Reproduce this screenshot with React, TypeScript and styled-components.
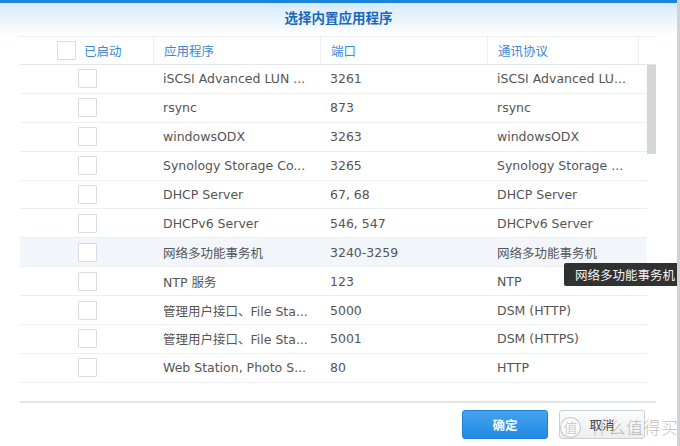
import React from 'react'
import styled, { createGlobalStyle } from 'styled-components'

const GlobalStyle = createGlobalStyle`
  html, body {
    margin: 0;
    padding: 0;
    background: #ffffff;
  }
  body {
    font-family: 'DejaVu Sans', 'Noto Sans CJK SC', sans-serif;
  }
`

interface rowProps {
  highlighted?: boolean
}

interface buttonProps {
  primary?: boolean
}

const ROWS = [
  { app: 'iSCSI Advanced LUN ...', port: '3261', proto: 'iSCSI Advanced LU...' },
  { app: 'rsync', port: '873', proto: 'rsync' },
  { app: 'windowsODX', port: '3263', proto: 'windowsODX' },
  { app: 'Synology Storage Co...', port: '3265', proto: 'Synology Storage ...' },
  { app: 'DHCP Server', port: '67, 68', proto: 'DHCP Server' },
  { app: 'DHCPv6 Server', port: '546, 547', proto: 'DHCPv6 Server' },
  { app: '网络多功能事务机', port: '3240-3259', proto: '网络多功能事务机', hover: true },
  { app: 'NTP 服务', port: '123', proto: 'NTP' },
  { app: '管理用户接口、File Sta...', port: '5000', proto: 'DSM (HTTP)' },
  { app: '管理用户接口、File Sta...', port: '5001', proto: 'DSM (HTTPS)' },
  { app: 'Web Station, Photo S...', port: '80', proto: 'HTTP' },
]

const StyledWindow = styled.div`
  position: relative;
  width: 677px;
  height: 446px;
  border-right: 3px solid #d0d3d6;
  background: #ffffff;
  overflow: hidden;
  display: flex;
  flex-direction: column;
`
const StyledTitleBar = styled.div`
  height: 36px;
  border-top: 3px solid #1b84dc;
  background: linear-gradient(180deg, #d6eafb 0%, #eef6fd 60%, #ffffff 100%);
  display: flex;
  align-items: center;
  justify-content: center;
  color: #1668bd;
  font-size: 13.5px;
  font-weight: bold;
  box-sizing: border-box;
  padding-bottom: 6px;
`
const StyledGrid = styled.div`
  margin: 0 21px 0 20px;
  border-top: 1px solid #eceef0;
  border-bottom: 2px solid #e3e4e6;
  display: flex;
  flex-direction: column;
`
const StyledHeader = styled.div`
  display: grid;
  grid-template-columns: 133px 167px 167px 151px 18px;
  height: 27px;
  border-bottom: 1px solid #e3e5e8;
`
const StyledHeaderCell = styled.div`
  display: flex;
  align-items: center;
  gap: 8px;
  padding-left: 10px;
  color: #3b88d6;
  font-size: 12.5px;
  border-left: 1px solid #eceef0;
  &:first-child {
    border-left: none;
    padding-left: 37px;
  }
`
const StyledBody = styled.div`
  display: grid;
  grid-template-columns: 1fr 9px;
  height: 336px;
`
const StyledRows = styled.div`
  display: flex;
  flex-direction: column;
`
const StyledRow = styled.div`
  display: grid;
  grid-template-columns: 133px 167px 167px 1fr;
  height: 28.9px;
  border-bottom: 1px solid #eeeff1;
  box-sizing: border-box;
  align-items: center;
  background: ${({ highlighted }: rowProps) => (highlighted ? '#f2f6fb' : '#ffffff')};
`
const StyledCheckCell = styled.div`
  display: flex;
  justify-content: center;
  padding-left: 1px;
`
const StyledCell = styled.div`
  padding-left: 10px;
  color: #555555;
  font-size: 12.5px;
  white-space: nowrap;
  overflow: hidden;
`
const StyledCheckbox = styled.span`
  display: inline-block;
  width: 17px;
  height: 17px;
  border: 1px solid #d9dbde;
  border-radius: 1px;
  background: #ffffff;
`
const StyledScrollTrack = styled.div`
  display: flex;
  flex-direction: column;
`
const StyledScrollThumb = styled.div`
  height: 89px;
  background: #d5d6d8;
`
const StyledFooter = styled.div`
  display: flex;
  justify-content: flex-end;
  gap: 11px;
  padding: 7px 32px 0 0;
`
const StyledButton = styled.div`
  width: 86px;
  height: 29px;
  box-sizing: border-box;
  border-radius: 3px;
  display: flex;
  align-items: center;
  justify-content: center;
  font-size: 12.5px;
  font-weight: ${({ primary }: buttonProps) => (primary ? 'bold' : 'normal')};
  color: ${({ primary }: buttonProps) => (primary ? '#ffffff' : '#444444')};
  background: ${({ primary }: buttonProps) =>
    primary
      ? 'linear-gradient(180deg, #45a3ee 0%, #2289e3 100%)'
      : 'linear-gradient(180deg, #fbfbfc 0%, #eceef0 100%)'};
  border: 1px solid ${({ primary }: buttonProps) => (primary ? '#1f7fd4' : '#cdd0d4')};
`
const StyledTooltip = styled.div`
  position: absolute;
  left: 564px;
  top: 263px;
  height: 23px;
  padding: 0 12px 0 11px;
  background: #2f3133;
  color: #f4f4f4;
  font-size: 12.5px;
  display: flex;
  align-items: center;
  white-space: nowrap;
  border-radius: 2px 0 0 2px;
`
const StyledWatermark = styled.div`
  position: absolute;
  left: 560px;
  top: 416px;
  display: flex;
  align-items: center;
  gap: 10px;
  white-space: nowrap;
  color: rgba(130, 130, 130, 0.5);
  font-size: 17px;
  line-height: 22px;
  letter-spacing: 0.5px;
  font-family: 'Noto Sans CJK SC', sans-serif;
  font-weight: 300;
  pointer-events: none;
`
const StyledWatermarkBadge = styled.span`
  width: 19px;
  height: 19px;
  flex-shrink: 0;
  border: 1.5px solid rgba(150, 150, 150, 0.5);
  border-radius: 50%;
  display: flex;
  align-items: center;
  justify-content: center;
  font-size: 14px;
  line-height: 1;
  letter-spacing: 0;
  background: rgba(255, 255, 255, 0.6);
`

export default function App() {
  return (
    <>
      <GlobalStyle />
      <StyledWindow>
        <StyledTitleBar>选择内置应用程序</StyledTitleBar>
        <StyledGrid>
          <StyledHeader>
            <StyledHeaderCell>
              <StyledCheckbox />
              已启动
            </StyledHeaderCell>
            <StyledHeaderCell>应用程序</StyledHeaderCell>
            <StyledHeaderCell>端口</StyledHeaderCell>
            <StyledHeaderCell>通讯协议</StyledHeaderCell>
            <StyledHeaderCell />
          </StyledHeader>
          <StyledBody>
            <StyledRows>
              {ROWS.map((r, i) => (
                <StyledRow key={i} highlighted={r.hover}>
                  <StyledCheckCell>
                    <StyledCheckbox />
                  </StyledCheckCell>
                  <StyledCell>{r.app}</StyledCell>
                  <StyledCell>{r.port}</StyledCell>
                  <StyledCell>{r.proto}</StyledCell>
                </StyledRow>
              ))}
            </StyledRows>
            <StyledScrollTrack>
              <StyledScrollThumb />
            </StyledScrollTrack>
          </StyledBody>
        </StyledGrid>
        <StyledFooter>
          <StyledButton primary>确定</StyledButton>
          <StyledButton>取消</StyledButton>
        </StyledFooter>
        <StyledTooltip>网络多功能事务机</StyledTooltip>
        <StyledWatermark>
          <StyledWatermarkBadge>值</StyledWatermarkBadge>
          什么值得买
        </StyledWatermark>
      </StyledWindow>
    </>
  )
}
